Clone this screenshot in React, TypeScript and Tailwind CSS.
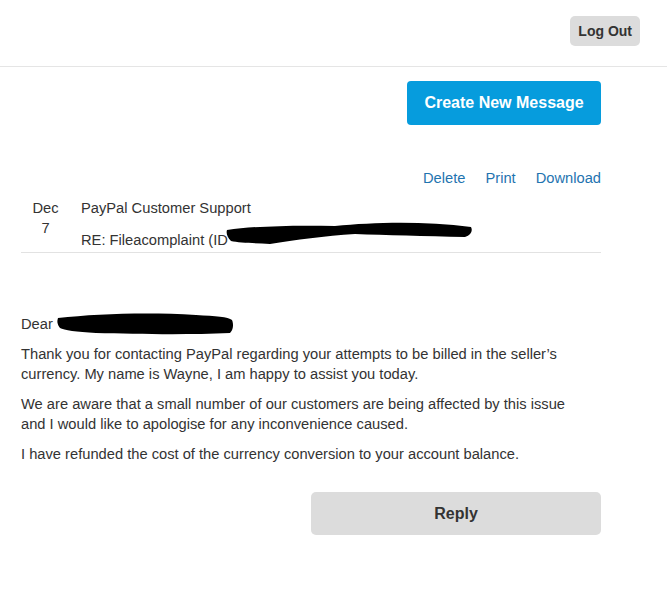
import React from 'react'

const font = { fontFamily: '"Liberation Sans", Arial, sans-serif' }

function Scribble({ w, h, d }: { w: number; h: number; d: string }) {
  return (
    <svg width={w} height={h} viewBox={`0 0 ${w} ${h}`} className="absolute">
      <path d={d} fill="#000" />
    </svg>
  )
}

export default function App() {
  return (
    <div className="min-h-screen bg-white text-[#333]" style={font}>
      <header className="h-[67px] border-b border-[#e5e5e5] flex items-start justify-end pt-[16px] pr-[27px]">
        <button className="h-[30px] px-[8px] rounded-[5px] bg-[#dcdcdc] text-[#333] text-[14px] font-bold">
          Log Out
        </button>
      </header>

      <main className="w-[580px] ml-[21px] text-[14.7px]">
        <div className="flex justify-end pt-[14px]">
          <button className="h-[44px] w-[194px] rounded-[4px] bg-[#069cdd] text-white text-[16px] font-bold">
            Create New Message
          </button>
        </div>

        <div className="flex justify-end gap-[20px] mt-[42px] text-[#1f74b0]">
          <a>Delete</a>
          <a>Print</a>
          <a>Download</a>
        </div>

        <div className="flex border-b border-[#e2e2e2] mt-[9px] pb-[2px]">
          <div className="w-[49px] text-center leading-[20px]">
            <div>Dec</div>
            <div>7</div>
          </div>
          <div className="ml-[11px] leading-[20px]">
            <div>PayPal Customer Support</div>
            <div className="relative mt-[12px]">
              RE: Fileacomplaint (ID
              <span className="relative inline-block align-top w-[1px]">
                <span className="absolute left-[-3px] top-[-11px]">
                  <Scribble
                    w={248}
                    h={26}
                    d="M2 11 C30 7 70 6 110 7 C150 3 200 2 246 8 C248 12 246 16 240 18 C200 17 160 16 130 15 C100 17 70 21 45 25 C30 24 14 24 6 22 C2 18 1 14 2 11 Z"
                  />
                </span>
              </span>
            </div>
          </div>
        </div>

        <div className="mt-[61px] leading-[20px]">
          <p className="relative">
            Dear
            <span className="relative inline-block align-top w-[1px]">
              <span className="absolute left-[3px] top-[-2px]">
                <Scribble
                  w={178}
                  h={24}
                  d="M2 6 C40 2 90 0 140 3 C160 4 172 5 176 8 C178 13 177 18 174 21 C130 23 80 22 40 21 C20 20 8 18 4 16 C1 12 1 9 2 6 Z"
                />
              </span>
            </span>
          </p>
          <p className="mt-[10px] w-[566px]">
            Thank you for contacting PayPal regarding your attempts to be billed in the seller’s currency. My name is
            Wayne, I am happy to assist you today.
          </p>
          <p className="mt-[10px] w-[566px]">
            We are aware that a small number of our customers are being affected by this issue and I would like to
            apologise for any inconvenience caused.
          </p>
          <p className="mt-[10px]">I have refunded the cost of the currency conversion to your account balance.</p>
        </div>

        <div className="flex justify-end mt-[28px]">
          <button className="h-[43px] w-[290px] rounded-[5px] bg-[#dcdcdc] text-[#333] text-[16px] font-bold">
            Reply
          </button>
        </div>
      </main>
    </div>
  )
}
